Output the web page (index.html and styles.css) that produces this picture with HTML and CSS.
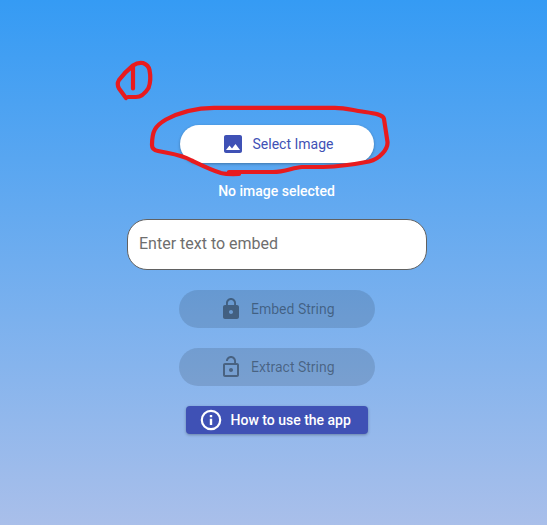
FILE: index.html
```html
<!DOCTYPE html>
<html lang="en">
<head>
<meta charset="utf-8">
<title>Image text embedder</title>
<link rel="stylesheet" href="styles.css">
</head>
<body>
<main class="app">
  <button class="pill pill-select">
    <svg class="icon" viewBox="0 0 24 24"><path d="M21 19V5c0-1.100-.9-2-2-2H5c-1.100 0-2 .9-2 2v14c0 1.100.9 2 2 2h14c1.100 0 2-.9 2-2zM8.500 13.500l2.500 3.010L14.500 12l4.500 6H5l3.500-4.500z"/></svg>
    <span>Select Image</span>
  </button>
  <p class="status">No image selected</p>
  <input class="field" type="text" placeholder="Enter text to embed">
  <button class="pill pill-disabled" disabled>
    <svg class="icon" viewBox="0 0 24 24"><path d="M18 8h-1V6c0-2.760-2.240-5-5-5S7 3.240 7 6v2H6c-1.100 0-2 .9-2 2v10c0 1.100.9 2 2 2h12c1.100 0 2-.9 2-2V10c0-1.100-.9-2-2-2zm-6 9c-1.100 0-2-.9-2-2s.9-2 2-2 2 .9 2 2-.9 2-2 2zm3.100-9H8.900V6c0-1.710 1.390-3.100 3.100-3.100s3.100 1.390 3.100 3.100v2z"/></svg>
    <span>Embed String</span>
  </button>
  <button class="pill pill-disabled" disabled>
    <svg class="icon" viewBox="0 0 24 24"><path d="M12 17c1.100 0 2-.9 2-2s-.9-2-2-2-2 .9-2 2 .9 2 2 2zm6-9h-1V6c0-2.760-2.240-5-5-5S7 3.240 7 6h1.900c0-1.710 1.390-3.100 3.100-3.100s3.100 1.390 3.100 3.100v2H6c-1.100 0-2 .9-2 2v10c0 1.100.9 2 2 2h12c1.100 0 2-.9 2-2V10c0-1.100-.9-2-2-2zm0 12H6V10h12v10z"/></svg>
    <span>Extract String</span>
  </button>
  <button class="help">
    <svg class="icon" viewBox="0 0 24 24"><circle cx="12" cy="12" r="9.200" fill="none" stroke="currentColor" stroke-width="2.200"/><path d="M10.800 10.800h2.400V17h-2.400zM10.800 7h2.400v2.200h-2.400z"/></svg>
    <span>How to use the app</span>
  </button>
</main>
<svg class="markup" viewBox="0 0 547 525">
  <path d="M126 98L119 88.500Q116.500 84 119 80Q125 72 133 65.500Q138 62 143 63Q148.500 65 149.500 70Q151.500 80 148.500 88Q143 97 136 97L128 97M133 67V88.500"/>
  <path d="M239 174Q227 174.500 221 173C211 170 200 164.500 191.700 160.500C181 154.500 172 154 158 151Q152 150 152 145C152 131 155 126 166 119.500C178 113 195 108 214 107.800H335C345 107.800 352 110 362 111.500C372 113 383 114 384 119L387.500 142C388 149 380 159 369 161.500C351 165 339 166.500 323 167H302C293 167.500 285 172 273 172H229"/>
</svg>
</body>
</html>
```
FILE: styles.css
```css
* { box-sizing: border-box; }

body {
  margin: 0;
  height: 525px;
  overflow: hidden;
  font-family: Roboto, sans-serif;
  font-size: 14px;
  background: linear-gradient(#359bf4, #a9bfea);
}

.app {
  display: flex;
  flex-direction: column;
  align-items: center;
  width: 554px;
  padding-top: 125px;
}

button {
  display: flex;
  align-items: center;
  border: 0;
  font: inherit;
  white-space: nowrap;
}

.icon {
  flex: none;
  width: 24px;
  height: 24px;
  fill: currentColor;
}

.pill {
  height: 38px;
  padding: 0 40px;
  gap: 8px;
  border-radius: 19px;
}

.pill-select {
  width: 194px;
  padding-left: 40.5px;
  color: #3f51b5;
  background: #fff;
  box-shadow: 0 1px 3px rgba(0, 0, 0, .3);
}

.pill-disabled {
  width: 196px;
  margin-bottom: 20px;
  color: rgba(0, 0, 0, .38);
  background: rgba(0, 0, 0, .12);
}

.status {
  margin: 20px 0;
  padding-right: 1px;
  line-height: 16px;
  font-weight: 500;
  color: #fff;
}

.field {
  width: 300px;
  height: 51px;
  margin-bottom: 20px;
  padding: 0 11px 2px;
  border: 1px solid #616161;
  border-radius: 20px;
  background: #fff;
  font: 16px Roboto, sans-serif;
}

.field::placeholder { color: #6e6e6e; opacity: 1; }

.help {
  width: 182px;
  height: 28px;
  padding: 0 12px 0 12.5px;
  gap: 8px;
  border-radius: 4px;
  color: #fff;
  background: #3f51b5;
  font-weight: 500;
  box-shadow: 0 1px 3px rgba(0, 0, 0, .3);
}

.markup {
  position: absolute;
  top: 0;
  left: 0;
  width: 547px;
  height: 525px;
  fill: none;
  stroke: #e81b1e;
  stroke-width: 4.2;
  stroke-linecap: round;
  stroke-linejoin: round;
  pointer-events: none;
}
```
